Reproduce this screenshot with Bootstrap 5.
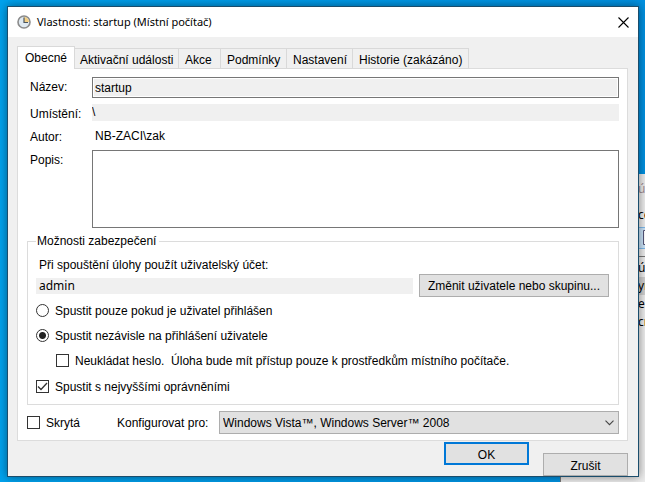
<!DOCTYPE html>
<html lang="cs">
<head>
<meta charset="utf-8">
<meta name="viewport" content="width=device-width, initial-scale=1">
<title>Vlastnosti: startup (Místní počítač)</title>
<link href="https://cdn.jsdelivr.net/npm/bootstrap@5.3.0/dist/css/bootstrap.min.css" rel="stylesheet">
<style>
  body { font-family: "Liberation Sans", Arial, sans-serif; font-size: 12px; line-height: 16px; color: #000; background: linear-gradient(90deg, #00a2ed, #0090e0); }
  .desktop { height: 100vh; padding: 6px 6px 5px 7px; }
  .ui-font { font-family: "Noto Sans", sans-serif; }
  .title-text { font-size: 11px; margin-left: 6px; }
  .back-window { left: 560px; right: 0; top: 174px; bottom: 0; background: #ececec; border-left: 1px solid #777; padding: 6px 0 0 76px; line-height: 18px; }
  .back-window .line { height: 18px; padding-left: 1px; white-space: nowrap; }
  .back-window .first { color: #a08c94; }
  .back-window .picked { background: #cfcfcf; }
  .back-window .tool { height: 22px; margin: 3px 0 7px; border: 1px solid #7fb9ea; border-right: 0; background: #c9e3f8; padding: 2px 0 0 5px; }
  .back-window .list-area { border-top: 1px solid #777; padding-top: 2px; }
  .dialog { background: #f0f0f0; border: 1px solid #1a4d6c; box-shadow: 0 0 9px rgba(0,0,0,.45); }
  .titlebar { height: 30px; padding: 0 9px; background: #fff; }
  .close-btn { line-height: 0; }
  .tabs { z-index: 1; padding: 9px 9px 0; }
  .tab { height: 21px; padding: 2px 0 0 5px; border: 1px solid #d9d9d9; border-left: 0; background: #f0f0f0; color: #000; white-space: nowrap; text-align: left; min-width: 104px; }
  .tab.active { height: 23px; min-width: 58px; padding: 0 0 1px 7px; border-left: 1px solid #d9d9d9; border-bottom: 0; background: #fff; }
  .tab.w-s { min-width: 42px; }
  .tab.w-m { min-width: 66px; }
  .tab.w-l { min-width: 116px; }
  .tab.w-s, .tab.w-m, .tab.w-l { padding-left: 6px; }
  .panel { margin: -1px 10px 0 9px; padding: 8px 8px 6px 9px; border: 1px solid #dcdcdc; background: #fff; }
  .form-grid { display: grid; grid-template-columns: 62px 1fr; grid-template-rows: 21px 17px 17px 78px; row-gap: 6px; padding-left: 3px; }
  .form-grid label, .form-grid .cap { padding-top: 2px; }
  .fld { border: 0; border-radius: 0; background: #f0f0f0; color: #000; outline: 0; padding: 0 3px; min-width: 0; }
  .fld.boxed { border: 1px solid #767676; box-shadow: inset 0 0 0 1px #fff; padding: 0 2px; }
  .area { background: #fff; resize: none; }
  .fld.path { padding: 0 0 1px; }
  .author { padding: 0 3px; align-self: center; }
  .group { margin-top: 5px; padding: 1px 9px 4px 8px; border: 1px solid #dcdcdc; }
  .group legend { float: none; width: auto; font-size: 12px; line-height: 16px; height: 16px; margin: 0; padding: 0 3px 0 1px; }
  .field-row { gap: 6px; padding-bottom: 1px; }
  .acct-cap { padding: 7px 0 1px 3px; }
  .btn-win { height: 23px; padding: 0; border: 1px solid #adadad; border-radius: 0; background: #e1e1e1; color: #000; line-height: 16px; }
  .btn-win.default { border: 2px solid #0078d7; }
  .btn-act { width: 85px; padding-top: 2px; }
  .btn-wide { width: 190px; }
  .opt { height: 25px; gap: 6px; }
  .opt.last { height: 27px; }
  .opt input { appearance: none; width: 13px; height: 13px; margin: 0; border: 1px solid #333; background: #fff center/11px 11px no-repeat; flex: none; }
  .opt input[type=radio] { border-radius: 50%; }
  .opt input[type=radio]:checked { background-image: radial-gradient(circle, #222 3px, transparent 4px); }
  .opt input[type=checkbox]:checked { background-image: url("data:image/svg+xml,%3Csvg xmlns='http://www.w3.org/2000/svg' viewBox='0 0 11 11'%3E%3Cpath d='M1 5.5 4 8.5 10 2' fill='none' stroke='%23333' stroke-width='1.3'/%3E%3C/svg%3E"); }
  .bottom-row { display: grid; grid-template-columns: 90px 102px 1fr; align-items: center; padding-top: 6px; }
  .bottom-row .opt { height: 23px; }
  .combo { height: 23px; border: 1px solid #adadad; border-radius: 0; color: #000; appearance: none; padding: 0 20px 0 3px; background: #e1e1e1 url("data:image/svg+xml,%3Csvg xmlns='http://www.w3.org/2000/svg' viewBox='0 0 9 6'%3E%3Cpath d='M.5.7 4.5 4.7 8.5.7' fill='none' stroke='%23444' stroke-width='1.1'/%3E%3C/svg%3E") right 4px center/9px 6px no-repeat; min-width: 0; }
  .actions { gap: 14px; padding: 1px 10px 0 0; }
  .actions .second { margin-top: 11px; }
</style>
</head>
<body>
<div class="desktop position-relative d-flex overflow-hidden">
  <div class="back-window ui-font position-absolute" aria-hidden="true">
    <div class="line first">ú</div>
    <div class="line mt-2">ce</div>
    <div class="tool"><svg class="d-block" width="12" height="15" viewBox="0 0 12 15"><path d="M.5.5h11v14H.5z" fill="#fff" stroke="#557"/><path d="M3 4h8M3 7h8M3 10h8" stroke="#557"/></svg></div>
    <div class="list-area">
      <div class="line">úl</div>
      <div class="line picked">yr</div>
      <div class="line">e</div>
      <div class="line">cr</div>
    </div>
  </div>

  <main class="dialog position-relative flex-grow-1 d-flex flex-column">
    <header class="titlebar d-flex align-items-center ui-font">
      <svg width="14" height="14" viewBox="0 0 14 14"><circle cx="7" cy="7" r="6" fill="#dfe9f1" stroke="#8b8b8b" stroke-width="1.6"/><path d="M7 7V2a5 5 0 0 1 5 5z" fill="#f3cf83"/><path d="M7 2.5V7.5H11" fill="none" stroke="#4b5661" stroke-width="1.2"/></svg>
      <span class="title-text flex-grow-1">Vlastnosti: startup (Místní počítač)</span>
      <button type="button" class="close-btn border-0 bg-transparent p-0" aria-label="Zavřít"><svg width="11" height="11" viewBox="0 0 11 11"><path d="M.5.5l10 10M10.5.5l-10 10" stroke="#000" stroke-width="1.1"/></svg></button>
    </header>

    <div class="tabs position-relative d-flex align-items-end" role="tablist">
      <button type="button" role="tab" class="tab active" aria-selected="true">Obecné</button>
      <button type="button" role="tab" class="tab">Aktivační události</button>
      <button type="button" role="tab" class="tab w-s">Akce</button>
      <button type="button" role="tab" class="tab w-m">Podmínky</button>
      <button type="button" role="tab" class="tab w-m">Nastavení</button>
      <button type="button" role="tab" class="tab w-l">Historie (zakázáno)</button>
    </div>

    <section class="panel">
      <div class="form-grid">
        <label for="nm">Název:</label>
        <input id="nm" class="fld boxed" value="startup" readonly>
        <label for="loc">Umístění:</label>
        <input id="loc" class="fld path" value="\" readonly>
        <span class="cap">Autor:</span>
        <span class="author">NB-ZACI\zak</span>
        <label for="desc">Popis:</label>
        <textarea id="desc" class="fld boxed area"></textarea>
      </div>

      <fieldset class="group">
        <legend>Možnosti zabezpečení</legend>
        <div class="acct-cap"><label for="acct">Při spouštění úlohy použít uživatelský účet:</label></div>
        <div class="field-row d-flex align-items-center">
          <input id="acct" class="fld ui-font flex-grow-1" value="admin" readonly>
          <button type="button" class="btn-win btn-wide">Změnit uživatele nebo skupinu...</button>
        </div>
        <div class="opt d-flex align-items-center"><input type="radio" name="run" id="r1"><label for="r1">Spustit pouze pokud je uživatel přihlášen</label></div>
        <div class="opt d-flex align-items-center"><input type="radio" name="run" id="r2" checked><label for="r2">Spustit nezávisle na přihlášení uživatele</label></div>
        <div class="opt d-flex align-items-center ms-3 ps-1"><input type="checkbox" id="c1"><label for="c1">Neukládat heslo.&nbsp; Úloha bude mít přístup pouze k prostředkům místního počítače.</label></div>
        <div class="opt last d-flex align-items-center"><input type="checkbox" id="c2" checked><label for="c2">Spustit s nejvyššími oprávněními</label></div>
      </fieldset>

      <div class="bottom-row">
        <div class="opt d-flex align-items-center"><input type="checkbox" id="c3"><label for="c3">Skrytá</label></div>
        <label for="cfg">Konfigurovat pro:</label>
        <select id="cfg" class="combo"><option>Windows Vista™, Windows Server™ 2008</option></select>
      </div>
    </section>

    <footer class="actions d-flex justify-content-end align-items-start">
      <button type="button" class="btn-win default btn-act">OK</button>
      <button type="button" class="btn-win btn-act second">Zrušit</button>
    </footer>
  </main>
</div>
<script src="https://cdn.jsdelivr.net/npm/bootstrap@5.3.0/dist/js/bootstrap.bundle.min.js"></script>
</body>
</html>
